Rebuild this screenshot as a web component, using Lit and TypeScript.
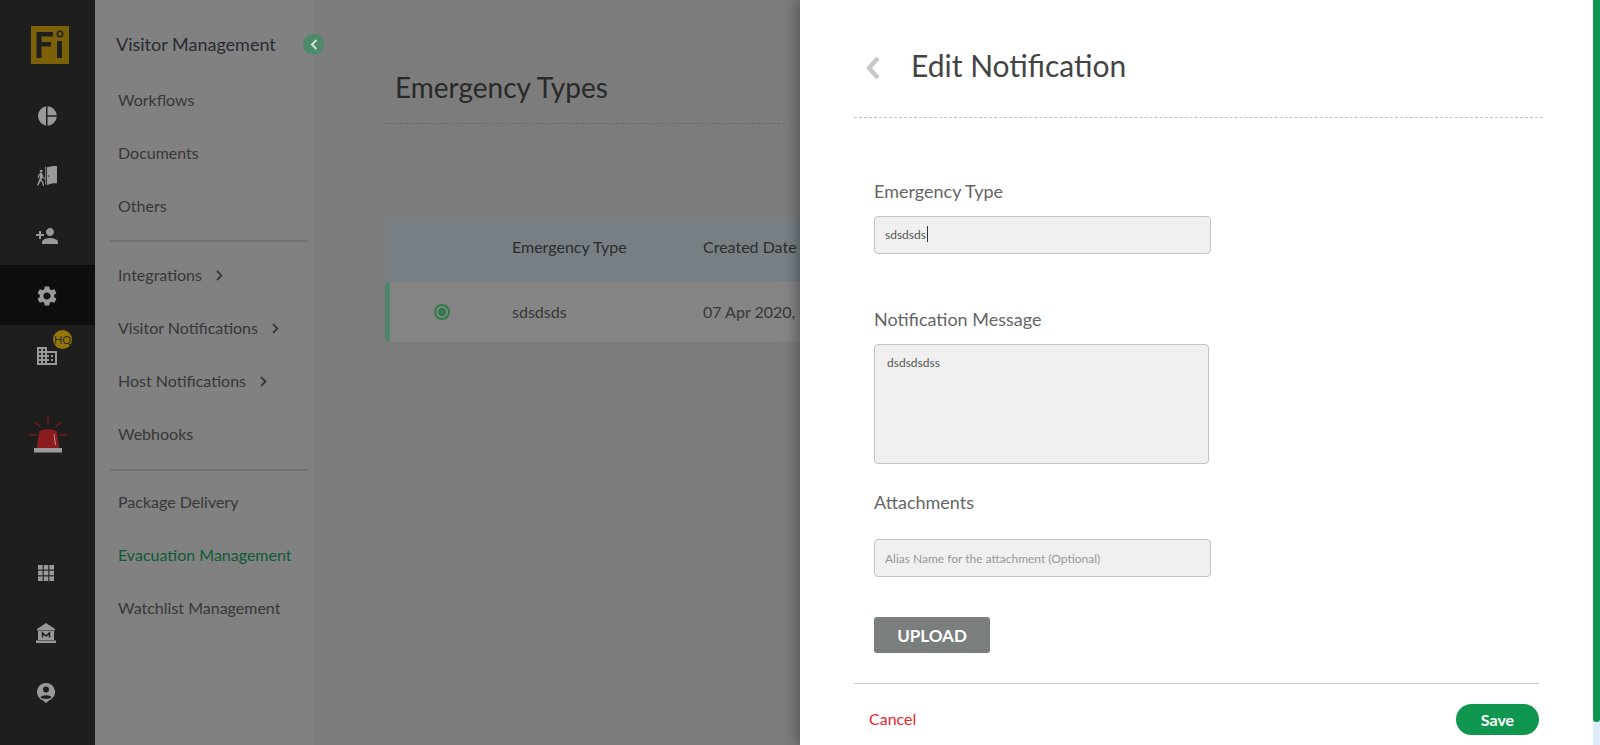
import { LitElement, html, css, svg } from 'lit';
import { customElement } from 'lit/decorators.js';

const mainIcons = [
	svg`<svg width="20" height="20" viewBox="0 0 20 20"><path d="M9 0.2A10 10 0 0 0 9 19.8Z M10.500 0.2A10 10 0 0 1 19.800 9.300H10.500Z M10.500 10.700H19.800A10 10 0 0 1 10.500 19.800Z" fill="currentColor"/></svg>`,
	svg`<svg width="22" height="20" viewBox="0 0 24 22"><path d="M12 1.5 19 0h4v19h-4.5L12 21Z" fill="currentColor"/><path d="M10.600 0.500v20" stroke="currentColor" stroke-width="1"/><circle cx="14" cy="11" r=".7" fill="#1e1e1e"/><circle cx="5.600" cy="5.600" r="1.600" fill="currentColor"/><path d="M4.400 7.600 2.200 10l-.4 3.200 1.200.2.4-2.600 1-.9-.6 4.200L1 20.800l1.300.8 2.700-5 1.800 1.800.6 4h1.300l-.6-4.800-2-2.200.5-2.800 1.200 1.400h2.200v-1.200H8.300L7 8.500C6.500 7.700 5.300 7.200 4.400 7.600Z" fill="currentColor"/></svg>`,
	svg`<svg width="24" height="24" viewBox="0 0 24 24"><path d="M15 12c2.210 0 4-1.790 4-4s-1.790-4-4-4-4 1.790-4 4 1.790 4 4 4zm-9-2V7H4v3H1v2h3v3h2v-3h3v-2H6zm9 4c-2.670 0-8 1.340-8 4v2h16v-2c0-2.660-5.330-4-8-4z" fill="currentColor"/></svg>`,
	svg`<svg width="24" height="24" viewBox="0 0 24 24"><path d="M19.14 12.94c.04-.3.06-.61.06-.94 0-.32-.02-.64-.07-.94l2.03-1.58c.18-.14.23-.41.12-.61l-1.92-3.32c-.12-.22-.37-.29-.59-.22l-2.39.96c-.5-.38-1.03-.7-1.62-.94l-.36-2.54c-.04-.24-.24-.41-.48-.41h-3.84c-.24 0-.43.17-.47.41l-.36 2.54c-.59.24-1.13.57-1.62.94l-2.39-.96c-.22-.08-.47 0-.59.22L2.74 8.87c-.12.21-.08.47.12.61l2.03 1.58c-.05.3-.09.63-.09.94s.02.64.07.94l-2.03 1.58c-.18.14-.23.41-.12.61l1.92 3.32c.12.22.37.29.59.22l2.39-.96c.5.38 1.03.7 1.62.94l.36 2.54c.05.24.24.41.48.41h3.84c.24 0 .44-.17.47-.41l.36-2.54c.59-.24 1.13-.56 1.62-.94l2.39.96c.22.08.47 0 .59-.22l1.92-3.32c.12-.22.07-.47-.12-.61l-2.01-1.58zM12 15.6c-1.98 0-3.6-1.62-3.6-3.6s1.62-3.6 3.6-3.6 3.6 1.62 3.6 3.6-1.62 3.6-3.6 3.6z" fill="currentColor"/></svg>`,
	svg`<svg width="24" height="24" viewBox="0 0 24 24"><path d="M12 7V3H2v18h20V7H12zM6 19H4v-2h2v2zm0-4H4v-2h2v2zm0-4H4V9h2v2zm0-4H4V5h2v2zm4 12H8v-2h2v2zm0-4H8v-2h2v2zm0-4H8V9h2v2zm0-4H8V5h2v2zm10 12h-8v-2h2v-2h-2v-2h2v-2h-2V9h8v10zm-2-8h-2v2h2v-2zm0 4h-2v2h2v-2z" fill="currentColor"/></svg>`,
];

const bottomIcons = [
	svg`<svg width="16" height="16" viewBox="0 0 16 16" fill="currentColor"><rect width="4.600" height="4.600"/><rect x="5.700" width="4.600" height="4.600"/><rect x="11.400" width="4.600" height="4.600"/><rect y="5.700" width="4.600" height="4.600"/><rect x="5.700" y="5.700" width="4.600" height="4.600"/><rect x="11.400" y="5.700" width="4.600" height="4.600"/><rect y="11.400" width="4.600" height="4.600"/><rect x="5.700" y="11.400" width="4.600" height="4.600"/><rect x="11.400" y="11.400" width="4.600" height="4.600"/></svg>`,
	svg`<svg width="20" height="20" viewBox="0 0 20 20"><path d="M10 0 19 6v1.500H1V6Z M2 8h16v9H2Z M0 17.500h20V20H0Z" fill="currentColor"/><path d="M6.500 14.500v-4.500L10 13l3.500-3v4.500" fill="none" stroke="#1e1e1e" stroke-width="1.500"/></svg>`,
	svg`<svg width="18" height="20" viewBox="0 0 18 20"><path d="M9 0a9 9 0 0 1 3 17.500L9 20l-3-2.500A9 9 0 0 1 9 0Z" fill="currentColor"/><circle cx="9" cy="6.500" r="3" fill="#1e1e1e"/><path d="M3.500 14.200C4.500 11.500 13.500 11.500 14.500 14.200 13 16.300 5 16.300 3.500 14.200Z" fill="#1e1e1e"/></svg>`,
];

const menuGroups = [
	[
		{ label: 'Workflows' },
		{ label: 'Documents' },
		{ label: 'Others' },
	],
	[
		{ label: 'Integrations', more: true },
		{ label: 'Visitor Notifications', more: true },
		{ label: 'Host Notifications', more: true },
		{ label: 'Webhooks' },
	],
	[
		{ label: 'Package Delivery' },
		{ label: 'Evacuation Management', active: true },
		{ label: 'Watchlist Management' },
	],
];

@customElement('app-root')
export default class AppRoot extends LitElement {

	static get styles() {
		return css`
			:host {
				display: block;
				position: relative;
				height: 745px;
				overflow: hidden;
				font-family: Lato, "Liberation Sans", sans-serif;
			}

			.page {
				display: flex;
				height: 745px;
				background: #ededed;
			}

			.rail {
				flex: 0 0 95px;
				display: flex;
				flex-direction: column;
				position: relative;
				z-index: 1;
				background: #1e1e1e;
				color: #999999;
			}

			.logo {
				flex: 0 0 59px;
				margin-top: 26px;
				padding-left: 31px;
			}

			.rail-item {
				flex: 0 0 60px;
				height: 60px;
				box-sizing: border-box;
				display: flex;
				align-items: center;
				justify-content: center;
				position: relative;
				padding: 2px 2px 0 0;
			}

			.rail-item.current {
				background: #0e0e0e;
			}

			.rail-item.low {
				padding: 0 3px 0 0;
			}

			.alarm {
				flex: 0 0 60px;
				margin-top: 20px;
				display: flex;
				align-items: center;
				justify-content: center;
			}

			.spacer {
				flex: 1;
			}

			.rail-bottom {
				margin-bottom: 22px;
			}

			.badge {
				position: absolute;
				left: 53px;
				top: 5px;
				width: 19px;
				height: 19px;
				border-radius: 50%;
				background: #967608;
				color: #2c2c2c;
				font-size: 11px;
				line-height: 19px;
				text-align: center;
			}

			.submenu {
				flex: 0 0 220px;
				box-sizing: border-box;
				background: #f7f7f7;
				padding: 0 7px 0 15px;
			}

			.submenu-title {
				height: 73px;
				box-sizing: border-box;
				padding: 33px 0 0 6px;
				font-size: 18px;
				line-height: 22px;
				color: #505662;
			}

			.group {
				display: flex;
				flex-direction: column;
				padding-bottom: 8px;
			}

			.group + .group {
				border-top: 2px solid #d8d8d8;
				padding-top: 6px;
				padding-bottom: 8px;
			}

			.group + .group + .group {
				margin-top: 1px;
				padding-top: 4px;
			}

			.menu-item {
				height: 53px;
				display: flex;
				align-items: center;
				gap: 14px;
				padding-left: 8px;
				font-size: 16px;
				color: #6c6c6c;
			}

			.menu-item.active {
				color: #1bb168;
			}

			.menu-item svg {
				margin-top: 2px;
			}

			.content {
				flex: 1;
				padding-left: 70px;
			}

			.content-head {
				width: 400px;
				height: 124px;
				box-sizing: border-box;
				padding: 67px 0 0 10px;
				border-bottom: 1px dashed #cfcfcf;
				font-size: 28px;
				line-height: 40px;
				color: #505050;
			}

			.table {
				margin-top: 92px;
				width: 415px;
				overflow: hidden;
				font-size: 16px;
				white-space: nowrap;
			}

			.table-row {
				display: grid;
				grid-template-columns: 127px 191px 1fr;
				align-items: center;
				box-sizing: border-box;
			}

			.table-row.header {
				height: 66px;
				padding-bottom: 6px;
				background: #e4f4fd;
				color: #555555;
			}

			.table-row.item {
				height: 60px;
				padding-bottom: 2px;
				background: #ffffff;
				color: #6c6c6c;
				border-left: 5px solid #96ffce;
				border-radius: 4px 0 0 4px;
				grid-template-columns: 122px 191px 1fr;
			}

			.radio {
				display: block;
				margin: 2px 0 0 43px;
			}

			.overlay {
				position: absolute;
				inset: 0;
				background: rgba(0, 0, 0, 0.48);
			}

			.collapse {
				position: absolute;
				left: 303px;
				top: 34px;
				z-index: 1;
				width: 21px;
				height: 21px;
				border-radius: 50%;
				background: #4c8a6a;
				display: flex;
				align-items: center;
				justify-content: center;
			}

			.drawer {
				position: absolute;
				left: 800px;
				top: 0;
				bottom: 0;
				z-index: 1;
				width: 793px;
				box-sizing: border-box;
				background: #ffffff;
				box-shadow: -4px 0 12px rgba(0, 0, 0, 0.3);
				padding-left: 54px;
			}

			.drawer-head {
				width: 689px;
				height: 118px;
				box-sizing: border-box;
				display: flex;
				align-items: center;
				padding: 13px 0 0 11px;
				border-bottom: 1px dashed #c4c4c4;
			}

			.drawer-head svg {
				margin: 5px 31px 0 0;
			}

			.drawer-title {
				font-size: 30px;
				color: #444444;
			}

			.form {
				padding: 62px 0 0 20px;
				height: 565px;
				box-sizing: border-box;
				display: flex;
				flex-direction: column;
			}

			label {
				display: block;
				font-size: 18px;
				line-height: 22px;
				color: #666666;
			}

			.field {
				box-sizing: border-box;
				width: 337px;
				height: 38px;
				margin-top: 14px;
				display: flex;
				align-items: center;
				padding: 0 10px;
				background: #f0f0f0;
				border: 1px solid #c4c4c4;
				border-radius: 4px;
				font-family: inherit;
				font-size: 12px;
				color: #555555;
				outline: none;
			}

			.field.typed {
				padding-bottom: 2px;
			}

			.field::placeholder {
				color: #999999;
				opacity: 1;
			}

			.caret {
				width: 1px;
				height: 16px;
				margin-left: 1px;
				background: #333333;
			}

			.message {
				box-sizing: border-box;
				display: block;
				width: 335px;
				height: 120px;
				margin-top: 14px;
				padding: 10px 12px;
				background: #f0f0f0;
				border: 1px solid #c4c4c4;
				border-radius: 4px;
				font-family: inherit;
				font-size: 12px;
				color: #555555;
				resize: none;
				outline: none;
			}

			.block-gap {
				margin-top: 54px;
			}

			.attach {
				margin-top: 27px;
			}

			.attach .field {
				margin-top: 26px;
			}

			.upload {
				width: 116px;
				height: 36px;
				margin-top: 40px;
				border: none;
				border-radius: 3px;
				background: #7a7e7c;
				color: #ffffff;
				font-family: inherit;
				font-size: 17px;
				font-weight: 700;
			}

			.drawer-foot {
				width: 685px;
				height: 62px;
				box-sizing: border-box;
				border-top: 1px solid #cccccc;
				display: flex;
				align-items: center;
				justify-content: space-between;
				padding: 10px 0 0 15px;
			}

			.cancel {
				font-size: 16px;
				line-height: 20px;
				margin-top: -2px;
				color: #e8262a;
			}

			.save {
				width: 83px;
				height: 31px;
				border: none;
				border-radius: 16px;
				background: #0f964f;
				color: #ffffff;
				font-family: inherit;
				font-size: 16px;
				font-weight: 700;
			}

			.scroll-track {
				position: absolute;
				right: 0;
				top: 0;
				bottom: 0;
				z-index: 1;
				width: 7px;
				background: #ddecfb;
			}

			.scroll-thumb {
				height: 722px;
				background: #0f964f;
				border-radius: 0 0 3px 3px;
			}
		`;
	}

	renderRail() {
		return html`
			<nav class="rail">
				<div class="logo">
					<svg width="38" height="38" viewBox="0 0 38 38">
						<rect width="38" height="38" fill="#7c6108"/>
						<path d="M5.500 6H22v4.500H10.500v5.500H20v4.500h-9.500V32h-5Z" fill="#1e1e1e"/>
						<rect x="26" y="15" width="5" height="17" fill="#1e1e1e"/>
						<circle cx="29" cy="8" r="2.700" fill="none" stroke="#1e1e1e" stroke-width="1.500"/>
					</svg>
				</div>
				${mainIcons.map((icon, i) => html`
					<div class="rail-item ${i === 3 ? 'current' : ''}">
						${icon}
						${i === 4 ? html`<span class="badge">HQ</span>` : ''}
					</div>
				`)}
				<div class="alarm">
					<svg width="40" height="38" viewBox="0 0 40 38">
						<path d="M20 0v7M7 6l5.500 5M33 6l-5.500 5M1 19h7M32 19h7" stroke="#7a1c1c" stroke-width="1.500" fill="none"/>
						<path d="M9 32c1-8 1-14 3-17 2-2.500 14-2.500 16 0 2 3 2 9 3 17Z" fill="#8a1c20"/>
						<path d="M26 18l1.500 11" stroke="#c98a8a" stroke-width="1" fill="none"/>
						<rect x="6" y="32" width="28" height="4.500" fill="#9a9a9a"/>
					</svg>
				</div>
				<div class="spacer"></div>
				<div class="rail-bottom">
					${bottomIcons.map(icon => html`<div class="rail-item low">${icon}</div>`)}
				</div>
			</nav>
		`;
	}

	renderSubmenu() {
		return html`
			<aside class="submenu">
				<div class="submenu-title">Visitor Management</div>
				${menuGroups.map(group => html`
					<div class="group">
						${group.map((item: any) => html`
							<div class="menu-item ${item.active ? 'active' : ''}">
								<span>${item.label}</span>
								${item.more ? html`
									<svg width="7" height="11" viewBox="0 0 7 11"><path d="M1 1l4.500 4.500L1 10" fill="none" stroke="#6c6c6c" stroke-width="1.800"/></svg>
								` : ''}
							</div>
						`)}
					</div>
				`)}
			</aside>
		`;
	}

	renderContent() {
		return html`
			<main class="content">
				<div class="content-head">Emergency Types</div>
				<div class="table">
					<div class="table-row header">
						<span></span>
						<span>Emergency Type</span>
						<span>Created Date</span>
					</div>
					<div class="table-row item">
						<svg class="radio" width="18" height="18" viewBox="0 0 18 18">
							<circle cx="9" cy="9" r="7" fill="none" stroke="#5ae890" stroke-width="2"/>
							<circle cx="9" cy="9" r="4.200" fill="#5ae890"/>
						</svg>
						<span>sdsdsds</span>
						<span>07 Apr 2020, 12:32 PM</span>
					</div>
				</div>
			</main>
		`;
	}

	render() {
		return html`
			<div class="page">
				${this.renderRail()}
				${this.renderSubmenu()}
				${this.renderContent()}
			</div>
			<div class="overlay"></div>
			<div class="collapse">
				<svg width="8" height="11" viewBox="0 0 8 11"><path d="M6.500 1 2 5.500 6.500 10" fill="none" stroke="#cfe3d8" stroke-width="2"/></svg>
			</div>
			<section class="drawer">
				<div class="drawer-head">
					<svg width="15" height="24" viewBox="0 0 15 24"><path d="M13 2 4 12l9 10" fill="none" stroke="#c8c8c8" stroke-width="4.500"/></svg>
					<span class="drawer-title">Edit Notification</span>
				</div>
				<div class="form">
					<label>Emergency Type</label>
					<div class="field typed">sdsdsds<span class="caret"></span></div>
					<div class="block-gap">
						<label>Notification Message</label>
						<textarea class="message">dsdsdsdss</textarea>
					</div>
					<div class="attach">
						<label>Attachments</label>
						<input class="field" placeholder="Alias Name for the attachment (Optional)">
					</div>
					<button class="upload">UPLOAD</button>
				</div>
				<div class="drawer-foot">
					<span class="cancel">Cancel</span>
					<button class="save">Save</button>
				</div>
			</section>
			<div class="scroll-track"><div class="scroll-thumb"></div></div>
		`;
	}
}
